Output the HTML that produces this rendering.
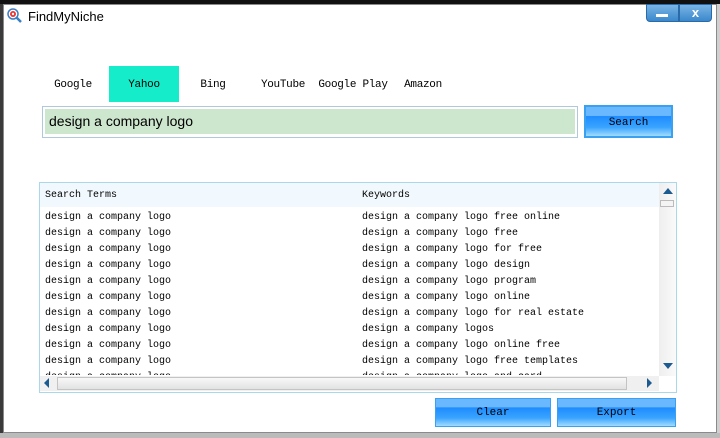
<!DOCTYPE html>
<html><head><style>
*{margin:0;padding:0;box-sizing:border-box}
body{width:720px;height:438px;background:#3a3a3a;position:relative;overflow:hidden;font-family:"Liberation Sans",sans-serif}
.a{position:absolute}
.win{left:3px;top:4px;width:714px;height:429px;background:#fff;border:1px solid #8a8a8a}
.tab{position:absolute;top:66px;height:36px;line-height:38px;font-family:"Liberation Mono",monospace;font-size:11px;color:#000;text-align:center;white-space:nowrap;letter-spacing:-0.3px}
.btn{position:absolute;border:1px solid #3aa0f0;background:linear-gradient(#6ab8ff 0,#6ab8ff 30%,#1e8cff 32%,#3aa4ff 70%,#a0dcff 100%);font-family:"Liberation Mono",monospace;font-size:11px;text-align:center;color:#000}
.row{position:absolute;font-family:"Liberation Mono",monospace;font-size:10px;color:#000;white-space:pre}
</style></head><body>
<div class="a" style="left:0;top:0;width:720px;height:4px;background:#111"></div>
<div class="a" style="left:717px;top:4px;width:3px;height:434px;background:#d0d0d0"></div>
<div class="a" style="left:0;top:433px;width:720px;height:5px;background:#bbb"></div>
<div class="a win"></div>
<svg class="a" style="left:7px;top:8px" width="16" height="16"><circle cx="6" cy="6" r="5" fill="#fff" stroke="#3a7fc4" stroke-width="1.5"/><circle cx="6" cy="6" r="3" fill="#e33"/><circle cx="6" cy="6" r="1.2" fill="#fff"/><line x1="9.5" y1="9.5" x2="14" y2="14" stroke="#3a7fc4" stroke-width="2.5"/></svg>
<div class="a" style="left:28px;top:9px;font-size:13px;color:#000">FindMyNiche</div>
<div class="a" style="left:646px;top:4px;width:33px;height:18px;background:linear-gradient(#7ab4e4,#3a88cc);border:1px solid #2a6aa8;border-radius:0 0 0 4px"></div>
<div class="a" style="left:656px;top:14px;width:12px;height:3px;background:#fff"></div>
<div class="a" style="left:679px;top:4px;width:33px;height:18px;background:linear-gradient(#7ab4e4,#3a88cc);border:1px solid #2a6aa8;border-radius:0 0 4px 0;color:#fff;font-weight:bold;font-size:13px;text-align:center;line-height:15px">x</div>
<div class="tab" style="left:46px;width:54px">Google</div>
<div class="tab" style="left:109px;width:70px;background:#14ecca">Yahoo</div>
<div class="tab" style="left:190px;width:46px">Bing</div>
<div class="tab" style="left:258px;width:50px">YouTube</div>
<div class="tab" style="left:316px;width:74px">Google Play</div>
<div class="tab" style="left:398px;width:50px">Amazon</div>
<div class="a" style="left:42px;top:106px;width:536px;height:32px;border:1px solid #b0c8dc;background:#fff"></div>
<div class="a" style="left:45px;top:109px;width:530px;height:25px;background:#cde6ce;font-size:14px;line-height:24px;padding-left:4px;color:#000">design a company logo</div>
<div class="btn" style="left:584px;top:105px;width:89px;height:33px;border:2px solid #3aa0f0;line-height:32px">Search</div>
<div class="a" style="left:39px;top:182px;width:638px;height:211px;border:1px solid #a8d8ea;background:#fff"></div>
<div class="a" style="left:40px;top:183px;width:619px;height:24px;background:#f2f9fe"></div>
<div class="row" style="left:45px;top:190px">Search Terms</div>
<div class="row" style="left:362px;top:190px">Keywords</div>
<div class="row" style="left:45px;top:210px;line-height:16px">design a company logo
design a company logo
design a company logo
design a company logo
design a company logo
design a company logo
design a company logo
design a company logo
design a company logo
design a company logo
design a company logo</div>
<div class="row" style="left:362px;top:210px;line-height:16px">design a company logo free online
design a company logo free
design a company logo for free
design a company logo design
design a company logo program
design a company logo online
design a company logo for real estate
design a company logos
design a company logo online free
design a company logo free templates
design a company logo and card</div>
<div class="a" style="left:40px;top:375px;width:636px;height:17px;background:#fff"></div>
<div class="a" style="left:659px;top:183px;width:17px;height:193px;background:linear-gradient(90deg,#eee,#fafafa)"></div>
<div class="a" style="left:663px;top:188px;width:0;height:0;border-left:5px solid transparent;border-right:5px solid transparent;border-bottom:6px solid #1c5a92"></div>
<div class="a" style="left:660px;top:200px;width:14px;height:7px;border:1px solid #bbb;background:#f4f4f4"></div>
<div class="a" style="left:663px;top:363px;width:0;height:0;border-left:5px solid transparent;border-right:5px solid transparent;border-top:6px solid #1c5a92"></div>
<div class="a" style="left:40px;top:376px;width:619px;height:15px;background:#f0f0f0"></div>
<div class="a" style="left:57px;top:377px;width:570px;height:13px;border:1px solid #c4c4c4;background:linear-gradient(#f8f8f8,#e2e2e2)"></div>
<div class="a" style="left:44px;top:378px;width:0;height:0;border-top:5px solid transparent;border-bottom:5px solid transparent;border-right:5px solid #1c5a92"></div>
<div class="a" style="left:647px;top:378px;width:0;height:0;border-top:5px solid transparent;border-bottom:5px solid transparent;border-left:5px solid #1c5a92"></div>
<div class="btn" style="left:435px;top:398px;width:116px;height:29px;line-height:29px">Clear</div>
<div class="btn" style="left:557px;top:398px;width:119px;height:29px;line-height:29px">Export</div>
</body></html>
